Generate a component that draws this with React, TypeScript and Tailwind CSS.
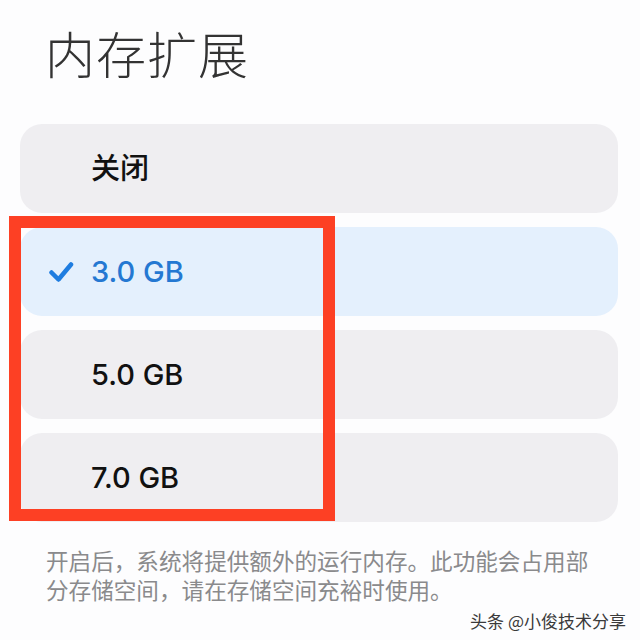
import React from 'react'

const options = [
  { label: '关闭', selected: false },
  { label: '3.0 GB', selected: true },
  { label: '5.0 GB', selected: false },
  { label: '7.0 GB', selected: false },
]

function Check() {
  return (
    <svg width="25" height="22" viewBox="0 0 25 22" fill="none">
      <path d="M2.5 11.5 L9.5 18.5 L22 3.5" stroke="#1f7de0" strokeWidth="4.5" strokeLinecap="round" strokeLinejoin="round" />
    </svg>
  )
}

export default function App() {
  return (
    <div
      className="relative w-[640px] h-[640px] overflow-hidden bg-[#fdfdfe]"
      style={{ fontFamily: 'Inter, "Noto Sans CJK SC", sans-serif' }}
    >
      {/* 标题 */}
      <h1 className="pl-[45px] pt-[24px] text-[50px] leading-[56px] font-light text-[#333333] tracking-[1px]" style={{ fontFamily: '"Noto Sans CJK SC", sans-serif' }}>
        内存扩展
      </h1>

      {/* 选项 */}
      <div className="mt-[44px] px-[20px] flex flex-col gap-[14px]">
        {options.map((o) => (
          <div
            key={o.label}
            className={`h-[89px] w-[598px] rounded-[22px] flex items-center ${o.selected ? 'bg-[#e4f0fd]' : 'bg-[#efeef1]'}`}
          >
            <div className="w-[71px] flex justify-end pr-[17px]">
              {o.selected && <Check />}
            </div>
            <span
              className={`text-[29px] leading-none font-medium ${o.selected ? 'text-[#2478d2]' : 'text-[#111111]'}`}
            >
              {o.label}
            </span>
          </div>
        ))}
      </div>

      {/* 说明 */}
      <p
        className="mt-[24px] pl-[46px] pr-[40px] text-[22.6px] leading-[29px] text-[#8a8a8c]"
        style={{ fontFamily: '"Noto Sans CJK SC", sans-serif' }}
      >
        开启后，系统将提供额外的运行内存。此功能会占用部分存储空间，请在存储空间充裕时使用。
      </p>

      {/* 红框标注 */}
      <div className="absolute left-[9px] top-[216px] w-[326px] h-[305px] border-[12px] border-[#fd4024]" />

      {/* 水印 */}
      <div
        className="absolute right-[14px] bottom-[11px] text-[17px] leading-none text-[#3a3a3a]"
        style={{ fontFamily: '"Noto Sans CJK SC", sans-serif' }}
      >
        头条 @小俊技术分享
      </div>
    </div>
  )
}
